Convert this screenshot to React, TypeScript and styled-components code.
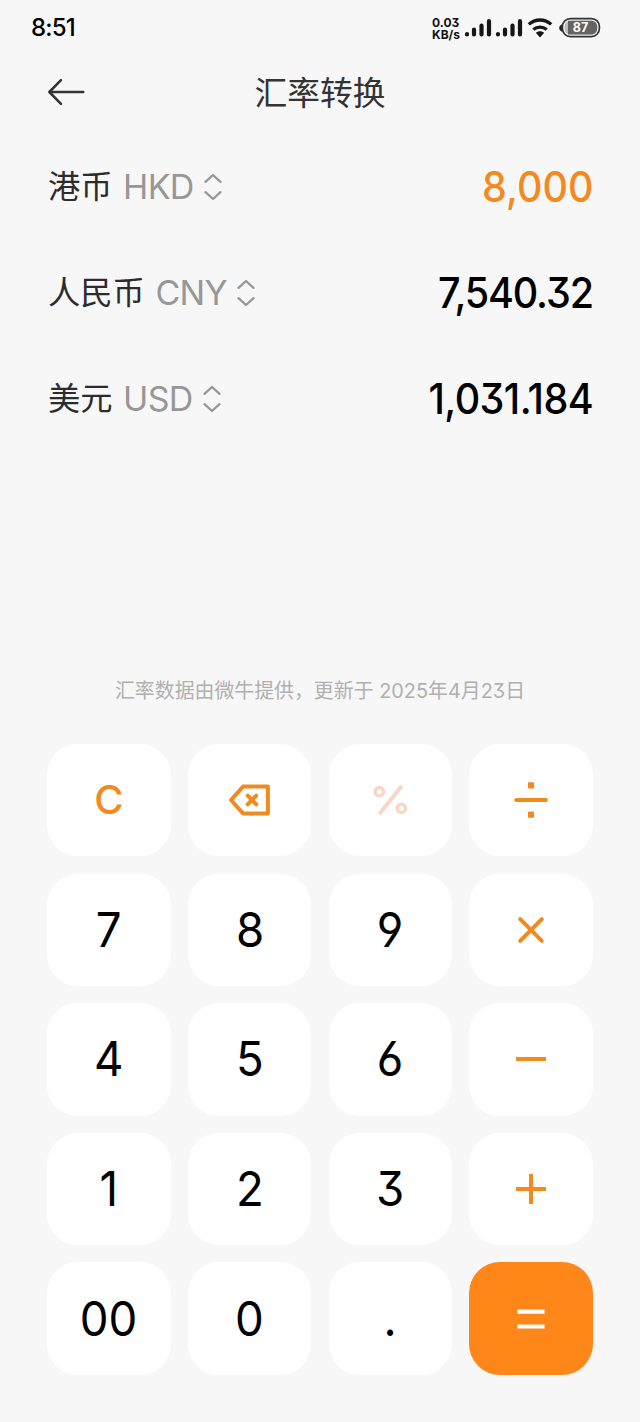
import React from "react";
import styled, { createGlobalStyle } from "styled-components";

const ORANGE = "#f28a20";

const GlobalStyle = createGlobalStyle`
  * { box-sizing: border-box; }
  body {
    margin: 0;
    background: #f7f7f7;
    font-family: Inter, "Noto Sans CJK SC", sans-serif;
    font-feature-settings: "cv09" 1, "cv03" 1, "cv04" 1;
  }
  button { font: inherit; font-feature-settings: inherit; border: 0; padding: 0; background: none; color: inherit; }
`;

const Screen = styled.main`
  width: 640px;
  height: 1422px;
  display: flex;
  flex-direction: column;
  background: #f7f7f7;
`;

const StatusBar = styled.header`
  height: 56px;
  padding: 0 39px 0 31px;
  display: flex;
  align-items: center;
  justify-content: space-between;
`;

const Clock = styled.span`
  font-size: 24px;
  font-weight: 500;
  line-height: 30px;
  letter-spacing: -0.8px;
  color: #000;
`;

const StatusIcons = styled.div`
  display: flex;
  align-items: center;
`;

const NetSpeed = styled.div`
  width: 32px;
  padding-top: 1px;
  display: flex;
  flex-direction: column;
  font-size: 12px;
  font-weight: 700;
  line-height: 11.5px;
  color: #111;
  white-space: nowrap;
`;

const TitleBar = styled.nav`
  height: 77px;
  padding: 0 47px;
  display: grid;
  grid-template-columns: 40px 1fr 40px;
  align-items: center;
`;

const BackButton = styled.button`
  display: flex;
  margin-top: -5px;
`;

const Title = styled.h1`
  margin: -3px 0 0;
  text-align: center;
  font-size: 32.8px;
  font-weight: 400;
  line-height: 44px;
  color: #333;
`;

const Currencies = styled.section`
  height: 536px;
  padding-top: 1px;
`;

const CurrencyRow = styled.div`
  height: 106px;
  padding: 0 47px 0 48px;
  display: flex;
  align-items: center;
  justify-content: space-between;
`;

const CurrencyPicker = styled.button`
  display: flex;
  align-items: center;
  gap: 10.5px;
`;

const CurrencyName = styled.span`
  font-size: 32.3px;
  font-weight: 400;
  line-height: 44px;
  color: #2c2c2c;
`;

const CurrencyCode = styled.span`
  font-size: 34px;
  font-weight: 400;
  line-height: 44px;
  letter-spacing: -0.7px;
  color: #979797;
`;

const Amount = styled.span<{ $active?: boolean; $tracking: number }>`
  font-size: 42px;
  font-weight: 450;
  line-height: 50px;
  letter-spacing: ${(p) => p.$tracking}px;
  transform: scaleX(0.94);
  transform-origin: right;
  color: ${(p) => (p.$active ? ORANGE : "#000")};
`;

const SourceNote = styled.p`
  height: 75px;
  margin: 0;
  padding-top: 7px;
  text-align: center;
  font-size: 19.9px;
  font-weight: 400;
  line-height: 30px;
  color: #b0b0b0;
`;

const Keypad = styled.section`
  padding: 0 47px;
  display: grid;
  grid-template-columns: repeat(4, 1fr);
  grid-auto-rows: 112.4px;
  gap: 17.2px;
`;

const Key = styled.button<{ $tone?: "operator" | "equals" }>`
  display: flex;
  align-items: center;
  justify-content: center;
  border-radius: 31px;
  background: ${(p) => (p.$tone === "equals" ? "#ff8719" : "#fff")};
  color: ${(p) => (p.$tone === "equals" ? "#fff" : p.$tone === "operator" ? ORANGE : "#000")};
`;

const Digit = styled.span`
  font-size: 48.5px;
  line-height: 60px;
  transform: scaleX(0.94);
`;

const ClearLabel = styled.span`
  font-size: 40px;
  font-weight: 500;
  line-height: 60px;
`;

const BackArrow = () => (
  <svg width="40" height="30" viewBox="0 0 40 30" fill="none" stroke="#333" strokeWidth="2.5" strokeLinecap="round" strokeLinejoin="round">
    <path d="M36.300 15H2.300M14 3.200 2.300 15 14 26.800" />
  </svg>
);

const Selector = () => (
  <svg width="18" height="28" viewBox="0 0 18 28" fill="none" stroke="#979797" strokeWidth="2.3" strokeLinecap="round" strokeLinejoin="round">
    <path d="M1.500 8.800 9 2l7.500 6.800M1.500 19.200 9 26l7.500-6.800" />
  </svg>
);

const Signal = () => (
  <svg width="31" height="22" viewBox="0 0 31 22" stroke="#161616" strokeWidth="4.200" strokeLinecap="round">
    <path d="M3 17.100v.4M10 12.500v5M17.500 8.500v9M25 4.200v13.300" />
  </svg>
);

const Wifi = () => (
  <svg width="27" height="22" viewBox="-1 0 27 22" fill="none" stroke="#161616" strokeWidth="3.300">
    <path d="M1.800 7.400C8.300 1.500 17.700 1.500 24.200 7.400M6.300 12.600C10.200 9.300 15.800 9.300 19.700 12.600" />
    <path d="M8.800 15.800c2.400-2.100 6-2.100 8.400 0L13 20.400z" fill="#161616" stroke="none" />
  </svg>
);

const BatteryBox = styled.div`
  display: grid;
  margin-left: 6px;
  width: 42px;
  height: 22px;
  > * { grid-area: 1 / 1; }
`;

const BatteryLevel = styled.span`
  padding-left: 1px;
  align-self: center;
  text-align: center;
  font-size: 12.5px;
  font-weight: 700;
  line-height: 22px;
  color: #fff;
`;

const Battery = () => (
  <BatteryBox>
    <svg width="42" height="22" viewBox="0 0 42 22">
      <path d="M3.500 7Q.200 8.500.200 11t3.300 4z" fill="#222" />
      <rect x="3.400" y="1.600" width="37" height="18" rx="8" fill="#f7f7f7" stroke="#333" strokeWidth="1.700" />
      <rect x="5.600" y="3.800" width="32.600" height="13.600" rx="5.500" fill="#bbb" />
      <path d="M9 3.800h23.700a5.500 5.500 0 0 1 5.500 5.500v2.600a5.500 5.500 0 0 1-5.500 5.500H9z" fill="#646464" />
    </svg>
    <BatteryLevel>87</BatteryLevel>
  </BatteryBox>
);

const KeyIcon = styled.svg<{ $color?: string; $weight?: number }>`
  width: 44px;
  height: 44px;
  fill: none;
  stroke: ${(p) => p.$color ?? "currentColor"};
  stroke-width: ${(p) => p.$weight ?? 4}px;
`;

const BackspaceIcon = () => (
  <KeyIcon viewBox="0 0 44 44" strokeLinejoin="round" strokeLinecap="round">
    <path d="M15 8.600H39.900V35.400H15L3 22z" />
    <path d="m19.700 17.600 8.600 8.800m0-8.800-8.600 8.800" />
  </KeyIcon>
);

const PercentIcon = () => (
  <KeyIcon viewBox="0 0 44 44" $color="#f9d5c3" $weight={3.4}>
    <circle cx="11.300" cy="13.700" r="4.200" />
    <circle cx="33.300" cy="30.300" r="4.200" />
    <path d="M33.600 8 11.400 36" strokeWidth="3.900" />
  </KeyIcon>
);

const DivideIcon = () => (
  <KeyIcon viewBox="0 0 44 44" strokeLinecap="round">
    <path d="M7.200 22h29.600" />
    <rect x="19" y="4.200" width="6" height="6.200" rx=".8" fill="currentColor" stroke="none" />
    <rect x="19" y="33.500" width="6" height="6.200" rx=".8" fill="currentColor" stroke="none" />
  </KeyIcon>
);

const TimesIcon = () => (
  <KeyIcon viewBox="0 0 44 44" strokeLinecap="round">
    <path d="m11.200 11.200 21.600 21.600m0-21.600L11.200 32.800" />
  </KeyIcon>
);

const MinusIcon = () => (
  <KeyIcon viewBox="0 0 44 44">
    <path d="M7 22h30" />
  </KeyIcon>
);

const PlusIcon = () => (
  <KeyIcon viewBox="0 0 44 44">
    <path d="M7 22h30M22 7v30" />
  </KeyIcon>
);

const EqualsIcon = () => (
  <KeyIcon viewBox="0 0 44 44" $color="#fff" $weight={4.2}>
    <path d="M8.500 14.700h27M8.500 29.500h27" />
  </KeyIcon>
);

const currencies = [
  { name: "港币", code: "HKD", amount: "8,000", tracking: 0, active: true },
  { name: "人民币", code: "CNY", amount: "7,540.32", tracking: -1.2 },
  { name: "美元", code: "USD", amount: "1,031.184", tracking: -0.6 },
];

const keyRows = [
  { digits: ["7", "8", "9"], id: "times", operator: <TimesIcon /> },
  { digits: ["4", "5", "6"], id: "minus", operator: <MinusIcon /> },
  { digits: ["1", "2", "3"], id: "plus", operator: <PlusIcon /> },
];

export default function App() {
  return (
    <Screen>
      <GlobalStyle />
      <StatusBar>
        <Clock>8:51</Clock>
        <StatusIcons>
          <NetSpeed>
            <span>0.03</span>
            <span>KB/s</span>
          </NetSpeed>
          <Signal />
          <Signal />
          <Wifi />
          <Battery />
        </StatusIcons>
      </StatusBar>
      <TitleBar>
        <BackButton>
          <BackArrow />
        </BackButton>
        <Title>汇率转换</Title>
      </TitleBar>
      <Currencies>
        {currencies.map((c) => (
          <CurrencyRow key={c.code}>
            <CurrencyPicker>
              <CurrencyName>{c.name}</CurrencyName>
              <CurrencyCode>{c.code}</CurrencyCode>
              <Selector />
            </CurrencyPicker>
            <Amount $active={c.active} $tracking={c.tracking}>{c.amount}</Amount>
          </CurrencyRow>
        ))}
      </Currencies>
      <SourceNote>汇率数据由微牛提供，更新于 2025年4月23日</SourceNote>
      <Keypad>
        <Key $tone="operator"><ClearLabel>C</ClearLabel></Key>
        <Key $tone="operator"><BackspaceIcon /></Key>
        <Key $tone="operator"><PercentIcon /></Key>
        <Key $tone="operator"><DivideIcon /></Key>
        {keyRows.map((row) => (
          <React.Fragment key={row.id}>
            {row.digits.map((d) => (
              <Key key={d}><Digit>{d}</Digit></Key>
            ))}
            <Key $tone="operator">{row.operator}</Key>
          </React.Fragment>
        ))}
        <Key><Digit>00</Digit></Key>
        <Key><Digit>0</Digit></Key>
        <Key><Digit>.</Digit></Key>
        <Key $tone="equals"><EqualsIcon /></Key>
      </Keypad>
    </Screen>
  );
}
